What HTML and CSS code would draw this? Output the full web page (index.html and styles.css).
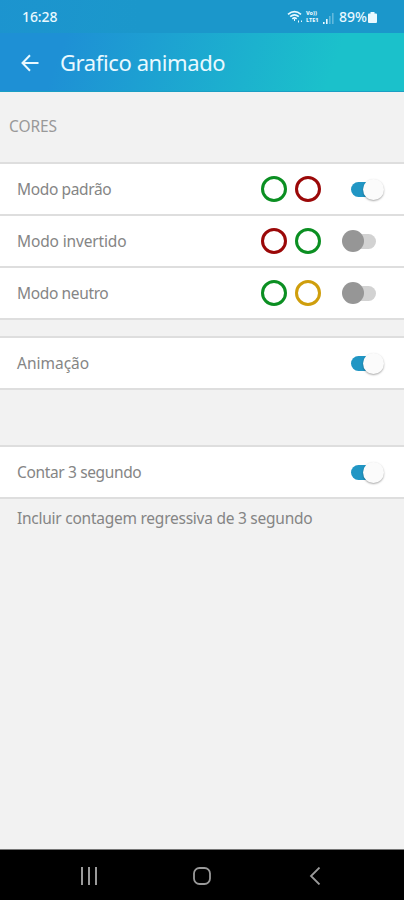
FILE: index.html
```html
<!DOCTYPE html>
<html lang="pt-BR">
<head>
    <meta charset="UTF-8">
    <meta name="viewport" content="width=device-width, initial-scale=1.0">
    <title>Grafico animado</title>
    <link rel="stylesheet" href="styles.css">
</head>
<body>
    <div class="screen">
        <header class="header">
            <div class="status-bar">
                <span class="time">16:28</span>
                <div class="status-icons">
                    <svg class="wifi" width="17" height="14" viewBox="0 0 17 14" fill="none" stroke="currentColor" stroke-width="1.7">
                        <path d="M1 4.300Q7.500 -1 14 4.300M3.200 6.600Q7.500 3 11.800 6.600M5.300 8.800Q7.500 7 9.700 8.800"/>
                        <path d="M7.500 9v2M11.500 10.500v2M14.500 10.500v1.500" stroke-width="1"/>
                    </svg>
                    <div class="volte"><span>Vo))</span><span>LTE1</span></div>
                    <svg class="signal" width="12" height="12" viewBox="0 0 12 12" fill="currentColor">
                        <path d="M0 10h1.600v2H0zM3 7h1.600v5H3z"/>
                        <path d="M6 4h1.600v8H6zM9 1h1.600v11H9z" opacity=".35"/>
                    </svg>
                    <span class="percent">89%</span>
                    <svg class="battery" width="9" height="11" viewBox="0 0 9 11" fill="currentColor">
                        <path d="M2.500 0h4v1.500H8a1 1 0 0 1 1 1V10a1 1 0 0 1-1 1H1a1 1 0 0 1-1-1V2.500a1 1 0 0 1 1-1h1.500z"/>
                    </svg>
                </div>
            </div>
            <div class="toolbar">
                <svg class="back" width="18" height="18" viewBox="0 0 18 18" fill="none" stroke="currentColor" stroke-width="2">
                    <path d="M17.500 9H2M9 1.300L1.500 9L9 16.700"/>
                </svg>
                <h1 class="title">Grafico animado</h1>
            </div>
        </header>

        <main class="content">
            <h2 class="section-title">CORES</h2>
            <div class="group">
                <div class="row">
                    <span class="label">Modo padrão</span>
                    <span class="ring green"></span>
                    <span class="ring red"></span>
                    <span class="switch on"></span>
                </div>
                <div class="row">
                    <span class="label label-inverted">Modo invertido</span>
                    <span class="ring red"></span>
                    <span class="ring green"></span>
                    <span class="switch"></span>
                </div>
                <div class="row">
                    <span class="label">Modo neutro</span>
                    <span class="ring green"></span>
                    <span class="ring yellow"></span>
                    <span class="switch"></span>
                </div>
            </div>
            <div class="group group-animation">
                <div class="row">
                    <span class="label label-animation">Animação</span>
                    <span class="switch on"></span>
                </div>
            </div>
            <div class="group group-count">
                <div class="row">
                    <span class="label">Contar 3 segundo</span>
                    <span class="switch on"></span>
                </div>
            </div>
            <p class="hint">Incluir contagem regressiva de 3 segundo</p>
        </main>

        <nav class="nav-bar">
            <svg width="18" height="18" viewBox="0 0 18 18" fill="none" stroke="currentColor" stroke-width="2">
                <path d="M2 0v18M9 0v18M16 0v18"/>
            </svg>
            <svg width="18" height="18" viewBox="0 0 18 18" fill="none" stroke="currentColor" stroke-width="1.800">
                <rect x="1" y="1" width="16" height="16" rx="5.500"/>
            </svg>
            <svg width="18" height="18" viewBox="0 0 18 18" fill="none" stroke="currentColor" stroke-width="1.800">
                <path d="M13.500 .5L5 9l8.500 8.500"/>
            </svg>
        </nav>
    </div>
</body>
</html>
```
FILE: styles.css
```css
* {
    box-sizing: border-box;
}

body {
    margin: 0;
    background-color: #f2f2f2;
    font-family: "Noto Sans", sans-serif;
}

.screen {
    width: 404px;
    height: 900px;
    display: flex;
    flex-direction: column;
    overflow: hidden;
}

.header {
    height: 92px;
    color: #e9f9ff;
    background: linear-gradient(110deg, #1e90d5 18%, #1bc1cb 82%);
    border-bottom: 1px solid #1b9fc4;
}

.status-bar {
    height: 33px;
    padding: 0 27px 0 22px;
    display: flex;
    align-items: center;
    justify-content: space-between;
    background: linear-gradient(90deg, rgba(27, 151, 203, 0.6), #1b97cb 35%);
}

.time {
    font-size: 14px;
    letter-spacing: -0.1px;
    font-weight: 500;
}

.status-icons {
    display: flex;
    align-items: center;
}

.volte {
    width: 16px;
    margin-left: 2px;
    display: flex;
    flex-direction: column;
    font-size: 5.5px;
    line-height: 7px;
    font-weight: 800;
}

.signal {
    margin: 2px 4px 0 1px;
}

.percent {
    font-size: 14px;
    letter-spacing: 0;
    font-weight: 500;
}

.battery {
    margin: 2px 0 0 1px;
}

.toolbar {
    height: 59px;
    padding-left: 21px;
    display: flex;
    align-items: center;
}

.title {
    margin: -2px 0 0 21px;
    font-size: 22px;
    font-weight: 400;
    letter-spacing: -0.4px;
    white-space: nowrap;
}

.content {
    flex: 1;
    color: #858585;
}

.section-title {
    height: 70px;
    margin: 0;
    padding: 0 0 2px 9px;
    display: flex;
    align-items: center;
    font-size: 15.5px;
    font-weight: 400;
    letter-spacing: -0.1px;
    color: #999;
}

.group {
    border-top: 2px solid #dedede;
}

.group-animation {
    margin-top: 16px;
}

.group-count {
    margin-top: 55px;
}

.row {
    height: 52px;
    padding: 0 20px 0 17px;
    display: flex;
    align-items: center;
    background-color: #fff;
    border-bottom: 2px solid #dedede;
}

.label {
    flex: 1;
    font-size: 15.5px;
    letter-spacing: -0.36px;
}

.label-inverted {
    letter-spacing: -0.15px;
}

.label-animation {
    letter-spacing: 0;
}

.ring {
    width: 26px;
    height: 26px;
    margin-right: 8px;
    border: 3px solid;
    border-radius: 50%;
}

.green {
    border-color: #0b8f22;
}

.red {
    border-color: #9b0808;
}

.yellow {
    border-color: #cf9e0c;
}

/* track is drawn by ::before, thumb by ::after */
.switch {
    position: relative;
    width: 43px;
    height: 22px;
    margin-left: 12px;
}

.switch::before {
    content: "";
    position: absolute;
    left: 9px;
    top: 4px;
    width: 26px;
    height: 15px;
    border-radius: 8px;
    background-color: #d2d2d2;
}

.switch::after {
    content: "";
    position: absolute;
    left: 1px;
    top: 0;
    width: 22px;
    height: 22px;
    border-radius: 50%;
    background-color: #969696;
}

.switch.on::before {
    left: 10px;
    background-color: #2196c4;
}

.switch.on::after {
    left: 22px;
    width: 21px;
    height: 21px;
    top: 1px;
    background-color: #fbfbfb;
    box-shadow: 0 1px 2px rgba(0, 0, 0, 0.35);
}

.hint {
    margin: 8px 0 0 17px;
    font-size: 15.5px;
    line-height: 22px;
    letter-spacing: -0.25px;
    white-space: nowrap;
}

.nav-bar {
    height: 51px;
    padding: 1px 80px 0 80px;
    display: flex;
    align-items: center;
    justify-content: space-between;
    color: #9a9a9a;
    background-color: #000;
    border-top: 1px solid #777;
}
```
